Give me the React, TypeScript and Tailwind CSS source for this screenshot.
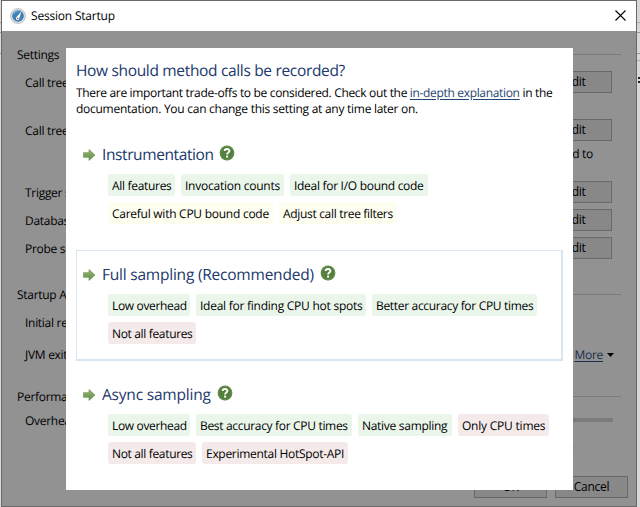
import type { ReactNode } from 'react';

type Tone = 'good' | 'warn' | 'bad';
type Chip = { text: string; tone: Tone; size: string };

const toneClass: Record<Tone, string> = {
  good: 'bg-[#ebf6eb]',
  warn: 'bg-[#fdfdf0]',
  bad: 'bg-[#f5eaea]',
};

function Arrow() {
  return (
    <svg className="mt-[2px] h-3 w-[13px] shrink-0" viewBox="0 0 13 12">
      <defs>
        <linearGradient id="arrow" x1="0" y1="0" x2="0" y2="1">
          <stop offset="0" stopColor="#98b878" />
          <stop offset="1" stopColor="#5f8b42" />
        </linearGradient>
      </defs>
      <path d="M.5 3.7H6V.6L12 6 6 11.4V8.3H.5Z" fill="url(#arrow)" stroke="#7b9d60" strokeWidth=".8" />
    </svg>
  );
}

function Help() {
  return (
    <svg className="size-4 shrink-0" viewBox="0 0 16 16">
      <circle cx="8" cy="8" r="7.4" fill="#54803d" />
      <circle cx="8" cy="8" r="6.6" fill="none" stroke="#6b9355" strokeWidth=".8" />
      <path d="M5.6 6C5.7 3.4 10.5 3.3 10.4 6C10.4 7.5 8.1 7.6 8.1 9.4" fill="none" stroke="#fff" strokeWidth="1.9" />
      <rect x="7.1" y="10.6" width="2" height="2" fill="#fff" />
    </svg>
  );
}

function AppIcon() {
  return (
    <svg className="size-4 shrink-0" viewBox="0 0 16 16">
      <circle cx="8" cy="8" r="7.5" fill="#dedede" stroke="#b5b8bb" strokeWidth=".8" />
      <circle cx="8" cy="8" r="5.8" fill="#3d7fb8" />
      <path d="M3.8 6a4.800 4.800 0 0 1 5-2.700" fill="none" stroke="#79addb" strokeWidth="1.2" />
      <path d="M11.400 3.300 9.300 10.200A1.700 1.700 0 1 1 6.600 9Z" fill="#fff" />
      <circle cx="7.8" cy="10.4" r=".8" fill="#c75a4a" />
    </svg>
  );
}

function Option({ title, titleSize, rows, selected }: { title: string; titleSize: string; rows: Chip[][]; selected?: boolean }) {
  return (
    <div className={`h-[111px] w-[487px] border-t border-r-2 border-b-2 border-l pl-1.5 ${selected ? 'border-[#d8e5f1]' : 'border-transparent'}`}>
      <div className="mt-[11px] flex h-6 items-center">
        <Arrow />
        <h2 className={`ml-[6px] h-6 shrink-0 text-[15.5px] leading-6 whitespace-nowrap text-[#20386c] ${titleSize}`}>{title}</h2>
        <span className="mb-[2px]"><Help /></span>
      </div>
      <div className="mt-2 ml-[25px] flex flex-col gap-1.5">
        {rows.map((row, i) => (
          <div key={i} className="flex gap-1.5">
            {row.map((c) => (
              <span key={c.text} className={`flex h-[22px] shrink-0 items-center rounded-[3px] pt-px pl-1 whitespace-nowrap ${toneClass[c.tone]} ${c.size}`}>{c.text}</span>
            ))}
          </div>
        ))}
      </div>
    </div>
  );
}

function Button({ children }: { children: ReactNode }) {
  return <button className="flex h-[22px] w-[73px] shrink-0 items-center justify-center border border-[#686868] bg-[#888] tracking-[-0.29px]">{children}</button>;
}

function Row({ label, className }: { label: string; className: string }) {
  return (
    <div className={`flex h-[22px] items-center justify-between pr-6 pl-[23px] ${className}`}>
      <span className="pt-px">{label}</span>
      <Button>Edit</Button>
    </div>
  );
}

function Section({ label, className }: { label: string; className: string }) {
  return (
    <div className={`flex h-4 items-center gap-2 pr-[15px] pl-[15px] ${className}`}>
      <span>{label}</span>
      <span className="mb-px h-px flex-1 bg-[#7a7a7a]" />
    </div>
  );
}

export default function App() {
  return (
    <div className="relative flex h-[507px] w-[640px] overflow-hidden bg-[#e4e4e4] font-['Open_Sans',sans-serif] text-[12px] leading-4 tracking-[-0.29px] text-black [text-rendering:geometricPrecision]">
      <div className="flex w-px flex-col bg-[#dcdcdc] pt-[22px]">
        <span className="h-px bg-[#999]" /><span className="mt-[9px] h-px bg-[#999]" /><span className="mt-5 h-px bg-[#999]" />
      </div>
      <div className="flex w-[636px] flex-col border border-[#696969] bg-[#929292]">
        <header className="flex h-[30px] shrink-0 items-center bg-white pr-[10px] pb-px pl-2">
          <AppIcon />
          <span className="ml-[5px] flex-1 tracking-[-0.2px]">Session Startup</span>
          <svg className="size-[11px]" viewBox="0 0 11 11"><path d="M.5.5l10 10M10.500.5l-10 10" stroke="#000" strokeWidth="1.1" /></svg>
        </header>
        <Section className="mt-4" label="Settings" />
        <Row className="mt-2" label="Call tree recording:" />
        <Row className="mt-[26px]" label="Call tree filters:" />
        <div className="mt-[5px] h-4 pr-[43px] text-right">Filters are added to</div>
        <Row className="mt-[19px]" label="Trigger settings:" />
        <Row className="mt-1.5" label="Database settings:" />
        <Row className="mt-1.5" label="Probe settings:" />
        <Section className="mt-7" label="Startup And Exit" />
        <div className="mt-3 h-4 pl-[23px]">Initial recording profile:</div>
        <div className="mt-4 flex h-4 items-center pr-[22px] pl-[23px]">
          <span className="flex-1">JVM exit action:</span>
          <span className="text-[#1b2f4b] underline underline-offset-2">More</span>
          <svg className="ml-1 h-1 w-[7px]" viewBox="0 0 7 4"><path d="M0 0h7L3.500 4Z" /></svg>
        </div>
        <Section className="mt-[26px]" label="Performance" />
        <div className="mt-2 flex h-4 items-center gap-4 pr-[23px] pl-[23px]">
          <span>Overhead:</span><span className="mb-[2px] h-1 flex-1 bg-[#7b7b7b]" />
        </div>
        <div className="mt-[17px] flex h-[3px] justify-end pr-[62px]"><span className="size-[3px] rounded-full bg-[#5b9488]" /></div>
        <div className="mt-[27px] flex justify-end gap-2 pr-2"><Button>OK</Button><Button>Cancel</Button></div>
      </div>
      <div className="flex w-[3px] flex-col bg-[#d8d8d8] pt-[22px]">
        <span className="h-px bg-[#aaa]" /><span className="mt-[9px] h-px bg-[#999]" /><span className="mt-5 h-px bg-[#999]" /><span className="mt-1.5 h-px bg-[#aaa]" />
        <span className="mt-4 ml-auto size-[2px] bg-[#223]" /><span className="mt-[2px] ml-auto size-[2px] bg-[#223]" />
      </div>

      <section className="absolute top-12 left-[66px] flex h-[442px] w-[507px] flex-col bg-white px-[10px]">
        <h1 className="mt-[12px] text-[15.5px] leading-5 tracking-[-0.33px] whitespace-nowrap text-[#20386c]">How should method calls be recorded?</h1>
        <p className="mt-[5px] tracking-[-0.33px] whitespace-nowrap">
          There are important trade-offs to be considered. Check out the <a className="text-[#1f4670] underline underline-offset-2">in-depth explanation</a> in the<br />
          <span className="tracking-[-0.27px]">documentation. You can change this setting at any time later on.</span>
        </p>
        <div className="mt-[13px] flex flex-col gap-[9px]">
          <Option title="Instrumentation" titleSize="w-[117px] tracking-[-0.4px]" rows={[
            [{ text: 'All features', tone: 'good', size: 'w-[67px] tracking-[-0.31px]' }, { text: 'Invocation counts', tone: 'good', size: 'w-[103px] tracking-[-0.24px]' }, { text: 'Ideal for I/O bound code', tone: 'good', size: 'w-[138px]' }],
            [{ text: 'Careful with CPU bound code', tone: 'warn', size: 'w-[165px] tracking-[-0.26px]' }, { text: 'Adjust call tree filters', tone: 'warn', size: 'w-[118px] tracking-[-0.32px]' }],
          ]} />
          <Option selected title="Full sampling (Recommended)" titleSize="w-[218px] tracking-[-0.22px]" rows={[
            [{ text: 'Low overhead', tone: 'good', size: 'w-[82px] tracking-[-0.34px]' }, { text: 'Ideal for finding CPU hot spots', tone: 'good', size: 'w-[170px] tracking-[-0.25px]' }, { text: 'Better accuracy for CPU times', tone: 'good', size: 'w-[165px] tracking-[-0.32px]' }],
            [{ text: 'Not all features', tone: 'bad', size: 'w-[88px] tracking-[-0.34px]' }],
          ]} />
          <Option title="Async sampling" titleSize="w-[115px] tracking-[-0.2px]" rows={[
            [{ text: 'Low overhead', tone: 'good', size: 'w-[82px] tracking-[-0.34px]' }, { text: 'Best accuracy for CPU times', tone: 'good', size: 'w-[156px] tracking-[-0.32px]' }, { text: 'Native sampling', tone: 'good', size: 'w-[94px]' }, { text: 'Only CPU times', tone: 'bad', size: 'w-[91px] tracking-[-0.22px]' }],
            [{ text: 'Not all features', tone: 'bad', size: 'w-[88px] tracking-[-0.34px]' }, { text: 'Experimental HotSpot-API', tone: 'bad', size: 'w-[146px]' }],
          ]} />
        </div>
      </section>
    </div>
  );
}
